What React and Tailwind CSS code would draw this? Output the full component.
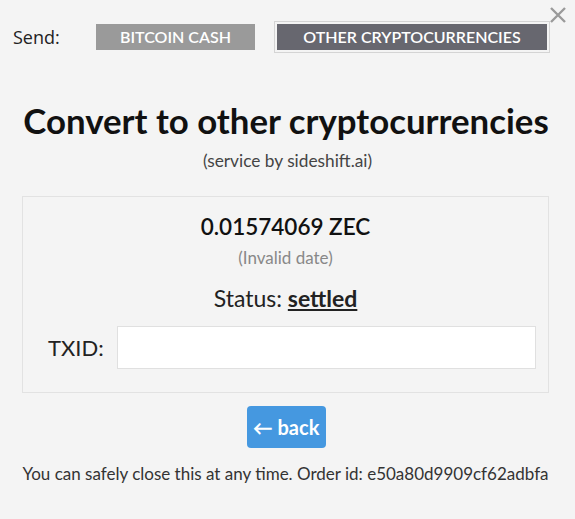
import React from "react";

// Modal for converting to other cryptocurrencies
export default function App() {
  return (
    <div
      className="relative w-[575px] h-[519px] bg-[#f4f4f4] text-[#222] overflow-hidden"
      style={{ fontFamily: "Lato, 'Open Sans', sans-serif" }}
    >
      {/* Close */}
      <button className="absolute left-[549px] top-[6px] w-[18px] h-[18px] text-[#9a9a9a]">
        <svg viewBox="0 0 18 18" className="w-full h-full" fill="none" stroke="currentColor" strokeWidth="2.4">
          <path d="M2 2 L16 16 M16 2 L2 16" />
        </svg>
      </button>

      {/* Send selector */}
      <div className="flex items-center pt-6 pl-[13px]">
        <span className="w-[83px] text-[18px] leading-[26px] text-[#222]" style={{ fontFamily: "'Open Sans', sans-serif" }}>
          Send:
        </span>
        <button className="w-[159px] h-[26px] bg-[#9a9a9a] text-white text-[16px] font-semibold uppercase">
          Bitcoin Cash
        </button>
        <button className="ml-[22px] w-[270px] h-[26px] bg-[#67676f] text-white text-[16px] font-semibold uppercase outline outline-offset-2 outline-[#d4d4d4]">
          Other cryptocurrencies
        </button>
      </div>

      {/* Title */}
      <h1 className="text-center font-bold text-[34.8px] text-[#111] mt-[51px] leading-[40px] pr-[3px]">
        Convert to other cryptocurrencies
      </h1>
      <p className="text-center text-[17.3px] leading-[24px] text-[#444] mt-[8px]">(service by sideshift.ai)</p>

      {/* Order box */}
      <div className="mx-[22px] w-[527px] mt-[23px] border border-[#e2e2e2] pt-[16px] pb-[23px]">
        <div className="text-center text-[22.5px] font-semibold text-[#111] leading-[28px]">0.01574069 ZEC</div>
        <div className="text-center text-[17px] leading-[22px] text-[#888] mt-[6px]">(Invalid date)</div>
        <div className="text-center text-[23px] text-[#222] mt-[16px] leading-[26px]">
          Status: <span className="font-bold underline underline-offset-2">settled</span>
        </div>
        <div className="flex items-center mt-[15px] pl-[25px] pr-[12px]">
          <label className="text-[22px] text-[#222] w-[69px]">TXID:</label>
          <input className="flex-1 h-[43px] bg-white border border-[#e0e0e0] outline-none" />
        </div>
      </div>

      {/* Back */}
      <div className="flex justify-center mt-[13px] pr-[3px]">
        <button className="w-[79px] h-[42px] bg-[#4598e0] rounded-[4px] text-white text-[20px] font-bold">
          ← back
        </button>
      </div>

      <p className="text-center text-[17px] leading-[24px] text-[#333] mt-[14px] pr-[4px]">
        You can safely close this at any time. Order id: e50a80d9909cf62adbfa
      </p>
    </div>
  );
}
